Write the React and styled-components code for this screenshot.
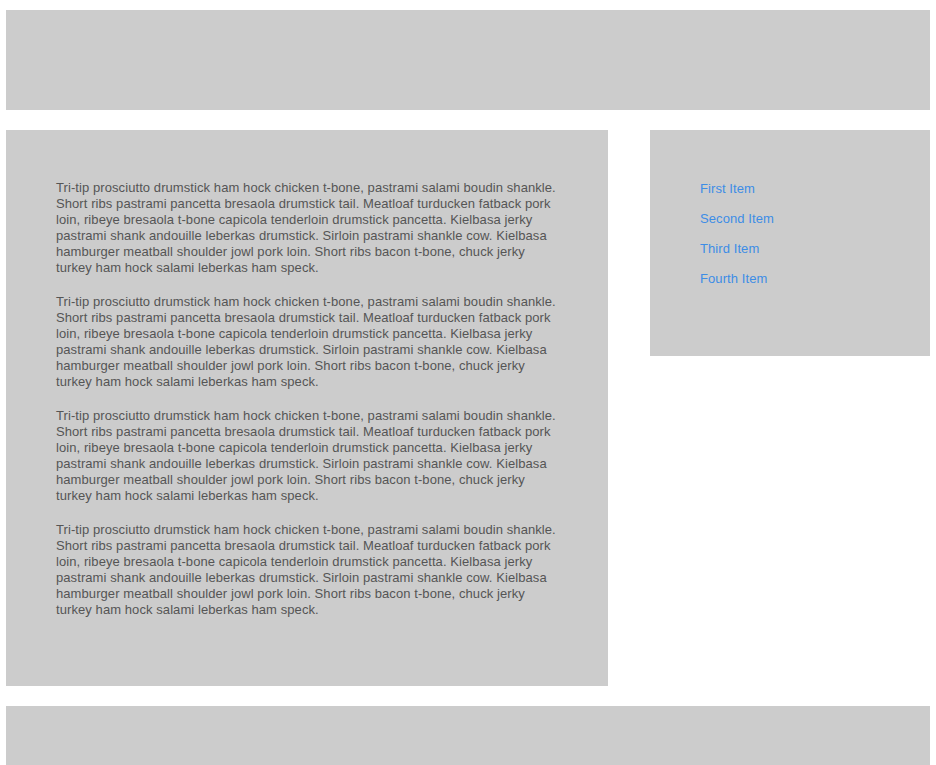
import React from 'react';
import styled, { createGlobalStyle } from 'styled-components';

const GlobalStyle = createGlobalStyle`
  body {
    margin: 0;
    background: #ffffff;
    font-family: 'Liberation Sans', Arial, sans-serif;
  }
`;

const Page = styled.div`
  padding: 10px 6px 0;
  display: flex;
  flex-direction: column;
  gap: 20px;
`;

const Header = styled.header`
  height: 100px;
  background: #cccccc;
`;

const Body = styled.div`
  display: flex;
  justify-content: space-between;
  align-items: flex-start;
`;

const Main = styled.main`
  width: 602px;
  box-sizing: border-box;
  padding: 50px 50px;
  background: #cccccc;
`;

const Para = styled.p`
  margin: 0 0 18px;
  font-size: 13px;
  line-height: 16px;
  letter-spacing: 0.08px;
  color: #555555;
`;

const Sidebar = styled.aside`
  width: 280px;
  height: 226px;
  box-sizing: border-box;
  padding: 44px 50px;
  background: #cccccc;
`;

const Menu = styled.ul`
  list-style: none;
  margin: 0;
  padding: 0;
`;

const MenuItem = styled.li`
  line-height: 30px;
  font-size: 13px;
  letter-spacing: 0.08px;
`;

const MenuLink = styled.a`
  color: #3d8de6;
  text-decoration: none;
`;

const Footer = styled.footer`
  height: 60px;
  background: #cccccc;
`;

const text =
  'Tri-tip prosciutto drumstick ham hock chicken t-bone, pastrami salami boudin shankle. Short ribs pastrami pancetta bresaola drumstick tail. Meatloaf turducken fatback pork loin, ribeye bresaola t-bone capicola tenderloin drumstick pancetta. Kielbasa jerky pastrami shank andouille leberkas drumstick. Sirloin pastrami shankle cow. Kielbasa hamburger meatball shoulder jowl pork loin. Short ribs bacon t-bone, chuck jerky turkey ham hock salami leberkas ham speck.';

const items = ['First Item', 'Second Item', 'Third Item', 'Fourth Item'];

export default function App() {
  return (
    <>
      <GlobalStyle />
      <Page>
        <Header />
        <Body>
          <Main>
            {[0, 1, 2, 3].map((i) => (
              <Para key={i}>{text}</Para>
            ))}
          </Main>
          <Sidebar>
            <Menu>
              {items.map((item) => (
                <MenuItem key={item}>
                  <MenuLink href="#">{item}</MenuLink>
                </MenuItem>
              ))}
            </Menu>
          </Sidebar>
        </Body>
        <Footer />
      </Page>
    </>
  );
}
